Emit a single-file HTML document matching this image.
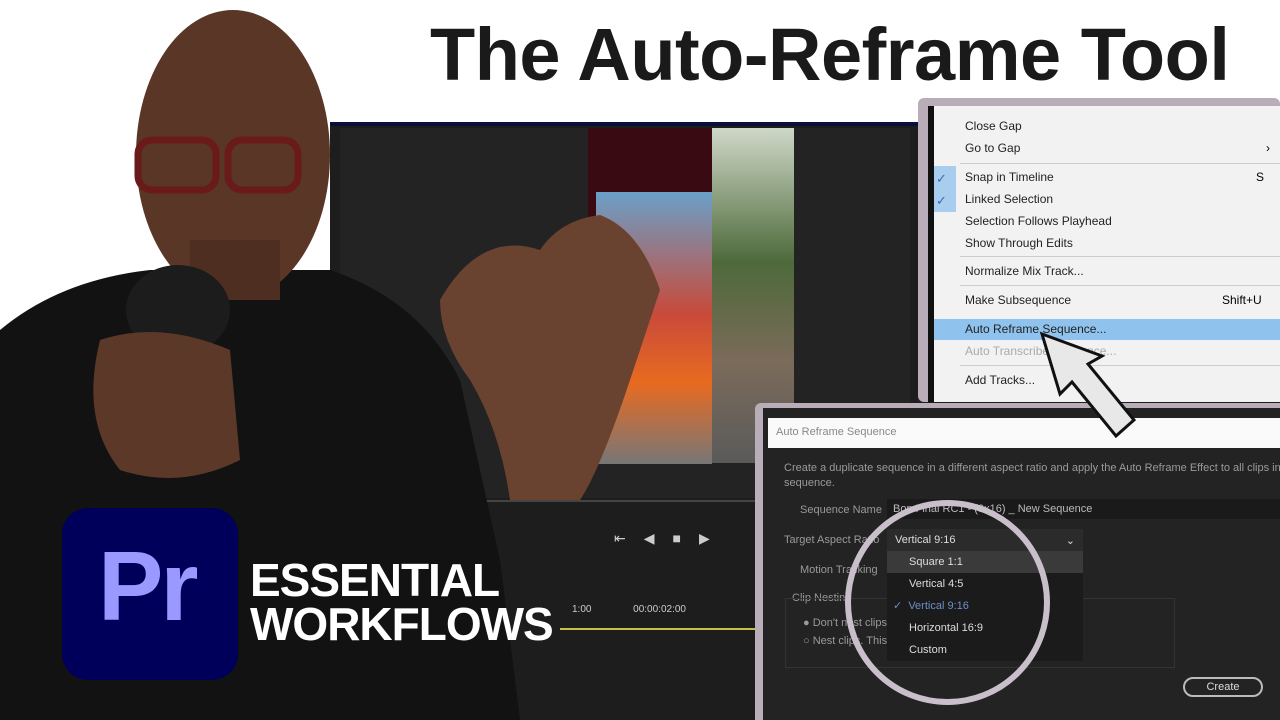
<!DOCTYPE html>
<html><head><meta charset="utf-8"><style>
*{margin:0;padding:0;box-sizing:border-box}
body{width:1280px;height:720px;overflow:hidden;background:#fff;position:relative;font-family:"Liberation Sans",sans-serif}
.a{position:absolute}
.title{left:430px;top:12px;font-size:74px;font-weight:bold;color:#1a1a1a;letter-spacing:-0.5px;white-space:nowrap}
.menu div.i{position:absolute;left:47px;font-size:12px;color:#222}
.dlg{font-size:11px;color:#9a9a9a}
</style></head><body>
<div class="a title">The Auto-Reframe Tool</div>
<div class="a" style="left:330px;top:122px;width:950px;height:598px;background:#1d1d1d;border-top:4px solid #0a0f3a"></div>
<div class="a" style="left:340px;top:128px;width:570px;height:370px;background:#232323"></div>
<div class="a" style="left:588px;top:128px;width:124px;height:335px;background:#3a0a12"></div>
<div class="a" style="left:712px;top:128px;width:82px;height:335px;background:linear-gradient(#cfd8c8,#4d6a3a 40%,#7b6b5a 70%,#5a5a5a)"></div>
<div class="a" style="left:596px;top:192px;width:116px;height:272px;background:linear-gradient(#6aa0c8,#c84a3a 45%,#e86a20 70%,#777)"></div>
<div class="a" style="left:340px;top:500px;width:580px;height:2px;background:#444"></div>
<div class="a" style="left:560px;top:628px;width:200px;height:2px;background:#c8c040"></div>
<div class="a" style="left:614px;top:530px;color:#ccc;font-size:14px;letter-spacing:18px">⇤◀■▶</div>
<div class="a" style="left:572px;top:604px;color:#ccc;font-size:10px">1:00 &nbsp; &nbsp; &nbsp; &nbsp; &nbsp; &nbsp; &nbsp; 00:00:02:00</div>
<div class="a menu" style="left:918px;top:98px;width:362px;height:304px;background:#b8adb8;border-radius:6px">
 <div class="a" style="left:10px;top:8px;width:352px;height:296px;background:#f2f2f2"></div>
 <div class="a" style="left:10px;top:8px;width:6px;height:296px;background:#111"></div>
 <div class="a" style="left:16px;top:68px;width:22px;height:46px;background:#a8cdef"></div>
 <div class="a" style="left:18px;top:70px;color:#3a6fb0;font-size:13px;line-height:22px">✓<br>✓</div>
 <div class="a" style="left:16px;top:221px;width:346px;height:21px;background:#8fc3ee"></div>
 <div class="i" style="top:21px">Close Gap</div>
 <div class="i" style="top:43px">Go to Gap</div><div class="a" style="left:348px;top:43px;font-size:12px">›</div>
 <div class="a" style="left:42px;top:65px;width:320px;height:1px;background:#ccc"></div>
 <div class="i" style="top:72px">Snap in Timeline</div><div class="a" style="left:338px;top:72px;font-size:12px">S</div>
 <div class="i" style="top:94px">Linked Selection</div>
 <div class="i" style="top:116px">Selection Follows Playhead</div>
 <div class="i" style="top:138px">Show Through Edits</div>
 <div class="a" style="left:42px;top:158px;width:320px;height:1px;background:#ccc"></div>
 <div class="i" style="top:166px">Normalize Mix Track...</div>
 <div class="a" style="left:42px;top:187px;width:320px;height:1px;background:#ccc"></div>
 <div class="i" style="top:195px">Make Subsequence</div><div class="a" style="left:304px;top:195px;font-size:12px">Shift+U</div>
 <div class="i" style="top:224px">Auto Reframe Sequence...</div>
 <div class="i" style="top:246px;color:#aaa">Auto Transcribe Sequence...</div>
 <div class="a" style="left:42px;top:267px;width:320px;height:1px;background:#ccc"></div>
 <div class="i" style="top:275px">Add Tracks...</div>
</div>
<div class="a dlg" style="left:755px;top:403px;width:525px;height:317px;background:#b8adb8;border-radius:6px 0 0 0">
 <div class="a" style="left:8px;top:5px;width:517px;height:312px;background:#232323"></div>
 <div class="a" style="left:13px;top:15px;width:512px;height:30px;background:#fafafa;color:#888;font-size:11px;padding:8px 8px">Auto Reframe Sequence</div>
 <div class="a" style="left:29px;top:58px;width:500px;line-height:15px">Create a duplicate sequence in a different aspect ratio and apply the Auto Reframe Effect to all clips in sequence.</div>
 <div class="a" style="left:45px;top:101px">Sequence Name</div>
 <div class="a" style="left:132px;top:96px;width:393px;height:20px;background:#1a1a1a;color:#bbb;padding:4px 6px">Bop Final RC1 - (9x16) _ New Sequence</div>
 <div class="a" style="left:29px;top:131px">Target Aspect Ratio</div>
 <div class="a" style="left:132px;top:126px;width:196px;height:22px;background:#2b2b2b;color:#ddd;padding:5px 8px">Vertical 9:16<span style="float:right">⌄</span></div>
 <div class="a" style="left:45px;top:161px">Motion Tracking</div>
 <div class="a" style="left:37px;top:189px">Clip Nesting</div>
 <div class="a" style="left:30px;top:195px;width:390px;height:70px;border:1px solid #333"></div>
 <div class="a" style="left:48px;top:214px">● Don't nest clips ... adjustments.</div>
 <div class="a" style="left:48px;top:232px">○ Nest clips. This ... remove transitions.</div>
 <div class="a" style="left:132px;top:148px;width:196px;height:110px;background:#1b1b1b;color:#ddd;line-height:22px">
  <div style="background:#3a3a3a;padding-left:22px">Square 1:1</div>
  <div style="padding-left:22px">Vertical 4:5</div>
  <div style="padding-left:6px;color:#6d8fc8">✓ &nbsp;Vertical 9:16</div>
  <div style="padding-left:22px">Horizontal 16:9</div>
  <div style="padding-left:22px">Custom</div>
 </div>
 <div class="a" style="left:428px;top:274px;width:80px;height:20px;border:2px solid #bbb;border-radius:10px;color:#ddd;text-align:center;line-height:16px">Create</div>
</div>
<div class="a" style="left:845px;top:500px;width:205px;height:205px;border:6px solid #c9bfca;border-radius:50%"></div>
<svg class="a" style="left:1030px;top:330px" width="110" height="120"><path d="M12 4 L72 26 L58 34 L104 90 L86 106 L42 52 L30 64 Z" fill="#e8e8e8" stroke="#111" stroke-width="3"/></svg>
<svg class="a" style="left:0;top:0" width="700" height="720">
 <path d="M0 330 Q60 280 150 270 L330 270 Q420 300 460 380 L500 560 L520 720 L0 720 Z" fill="#121212"/>
 <ellipse cx="233" cy="155" rx="97" ry="145" fill="#5a3626"/>
 <rect x="190" y="240" width="90" height="60" fill="#4e2e20"/>
 <rect x="138" y="140" width="78" height="50" rx="14" fill="none" stroke="#6a1a1a" stroke-width="7"/>
 <rect x="228" y="140" width="70" height="50" rx="14" fill="none" stroke="#6a1a1a" stroke-width="7"/>
 <ellipse cx="178" cy="310" rx="52" ry="45" fill="#1c1c1c"/>
 <path d="M100 340 Q160 320 230 350 L240 460 Q180 490 120 470 Q80 420 100 340 Z" fill="#5c3828"/>
 <path d="M440 300 Q480 230 540 250 Q560 220 600 215 Q640 230 660 290 L630 380 Q600 470 580 500 L510 500 Q500 430 470 380 Q440 340 440 300 Z" fill="#6a4230"/>
</svg>
<div class="a" style="left:62px;top:508px;width:176px;height:172px;background:#00005b;border-radius:26px"></div>
<div class="a" style="left:98px;top:530px;font-size:98px;font-weight:bold;color:#9999ff;letter-spacing:-3px">Pr</div>
<div class="a" style="left:250px;top:558px;color:#fff;font-size:46px;line-height:44px;font-weight:bold;letter-spacing:-1px">ESSENTIAL<br>WORKFLOWS</div>
</body></html>
